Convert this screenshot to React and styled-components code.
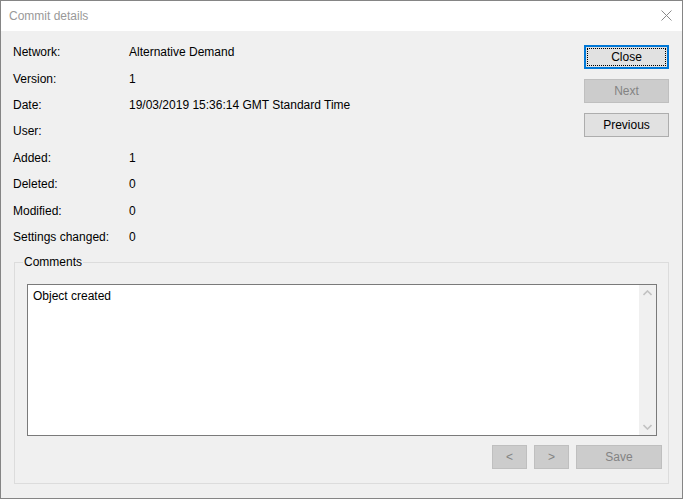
import React from 'react';
import styled, { createGlobalStyle } from 'styled-components';

const GlobalStyle = createGlobalStyle`
  html, body {
    margin: 0;
    padding: 0;
    background: #ffffff;
  }
  body {
    font-family: "Liberation Sans", Arial, sans-serif;
    font-size: 12px;
    color: #000;
  }
`;

const Window = styled.div`
  width: 683px;
  height: 499px;
  box-sizing: border-box;
  border: 1px solid #858585;
  display: flex;
  flex-direction: column;
  background: #f0f0f0;
`;

const TitleBar = styled.div`
  height: 30px;
  flex: 0 0 30px;
  background: #ffffff;
  display: flex;
  align-items: center;
  justify-content: space-between;
  padding: 0 10px 0 8px;
`;

const TitleText = styled.span`
  color: #999999;
  font-size: 12px;
`;

const CloseGlyph = styled.svg`
  width: 11px;
  height: 11px;
  margin-top: -1px;
`;

const Body = styled.div`
  flex: 1;
  display: flex;
  flex-direction: column;
  padding: 8px 13px 14px 12px;
`;

const TopSection = styled.div`
  display: flex;
  justify-content: space-between;
`;

const DetailGrid = styled.dl`
  margin: 0;
  display: grid;
  grid-template-columns: 116px auto;
  grid-auto-rows: 26.43px;
  align-items: center;
`;

const Label = styled.dt`
  margin: 0;
`;

const Value = styled.dd`
  margin: 0;
`;

const ButtonColumn = styled.div`
  display: flex;
  flex-direction: column;
  gap: 10px;
  margin-top: 6px;
`;

const Button = styled.button`
  font-family: inherit;
  font-size: 12px;
  box-sizing: border-box;
  width: ${(p) => p.$width || 85}px;
  height: 24px;
  padding: 0;
  background: #e1e1e1;
  border: 1px solid #adadad;
  color: #000;
  position: relative;

  &:disabled {
    background: #cccccc;
    border-color: #bfbfbf;
    color: #838383;
  }

  ${(p) =>
    p.$default &&
    `
    border: 2px solid #0078d7;
    &::after {
      content: '';
      position: absolute;
      inset: 1px;
      border: 1px dotted #000;
    }
  `}
`;

const GroupBox = styled.fieldset`
  flex: 1;
  margin: 5px 0 0 1px;
  padding: 14px 6px 13px 12px;
  border: 1px solid #dcdcdc;
  min-width: 0;
  display: flex;
  flex-direction: column;
`;

const Legend = styled.legend`
  padding: 0 1px;
  margin-left: -4px;
  line-height: 15px;
`;

const TextBox = styled.div`
  height: 152px;
  box-sizing: border-box;
  margin-right: 5px;
  border: 1px solid #7a7a7a;
  background: #ffffff;
  display: flex;
`;

const TextContent = styled.div`
  flex: 1;
  padding: 4px 5px;
`;

const ScrollBar = styled.div`
  width: 17px;
  background: #f0f0f0;
  display: flex;
  flex-direction: column;
  justify-content: space-between;
  align-items: center;
  padding: 5px 0;
`;

const ActionRow = styled.div`
  display: flex;
  justify-content: flex-end;
  gap: 7px;
  margin-top: 9px;
`;

const Chevron = ({ up }) => (
  <svg width="9" height="6" viewBox="0 0 9 6">
    <path
      d={up ? 'M0.5 5 L4.5 1 L8.5 5' : 'M0.5 1 L4.5 5 L8.5 1'}
      fill="none"
      stroke="#c2c2c2"
      strokeWidth="1.6"
    />
  </svg>
);

const details = [
  ['Network:', 'Alternative Demand'],
  ['Version:', '1'],
  ['Date:', '19/03/2019 15:36:14 GMT Standard Time'],
  ['User:', ''],
  ['Added:', '1'],
  ['Deleted:', '0'],
  ['Modified:', '0'],
  ['Settings changed:', '0'],
];

export default function App() {
  return (
    <>
      <GlobalStyle />
      <Window>
        <TitleBar>
          <TitleText>Commit details</TitleText>
          <CloseGlyph viewBox="0 0 11 11">
            <path d="M0.5 0.5 L10.5 10.5 M10.5 0.5 L0.5 10.5" stroke="#8a8a8a" strokeWidth="1" fill="none" />
          </CloseGlyph>
        </TitleBar>
        <Body>
          <TopSection>
            <DetailGrid>
              {details.map(([label, value]) => (
                <React.Fragment key={label}>
                  <Label>{label}</Label>
                  <Value>{value}</Value>
                </React.Fragment>
              ))}
            </DetailGrid>
            <ButtonColumn>
              <Button $default>Close</Button>
              <Button disabled>Next</Button>
              <Button>Previous</Button>
            </ButtonColumn>
          </TopSection>
          <GroupBox>
            <Legend>Comments</Legend>
            <TextBox>
              <TextContent>Object created</TextContent>
              <ScrollBar>
                <Chevron up />
                <Chevron />
              </ScrollBar>
            </TextBox>
            <ActionRow>
              <Button disabled $width={35}>&lt;</Button>
              <Button disabled $width={35}>&gt;</Button>
              <Button disabled $width={86}>Save</Button>
            </ActionRow>
          </GroupBox>
        </Body>
      </Window>
    </>
  );
}
